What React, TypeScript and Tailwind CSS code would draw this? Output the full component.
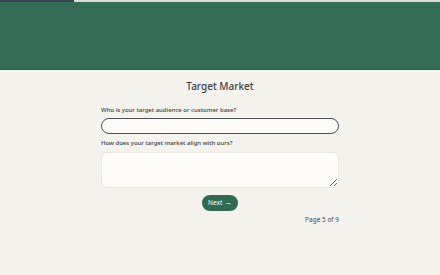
import { useState } from 'react';

export default function App() {
  const [audience, setAudience] = useState('');
  const [align, setAlign] = useState('');

  return (
    <div className="min-h-[275px] bg-[#f4f2ec] font-['Noto_Sans',sans-serif] text-[#3d3f44]">
      <div className="h-[2px] w-full bg-[#dddbd6]">
        <div className="h-full w-[74px] bg-[#3b3f52]" />
      </div>

      <header className="h-[68px] border-b border-[#2a5b45] bg-[#356c55]" />

      <main className="mx-auto flex w-[238px] flex-col pt-[9px]">
        <h1 className="text-center text-[10px] leading-[15px] font-medium">Target Market</h1>

        <label className="mt-[12px] text-[6px] leading-[9px] font-medium">
          Who is your target audience or customer base?
        </label>
        <input
          value={audience}
          onChange={(e) => setAudience(e.target.value)}
          className="mt-[3px] h-[16px] w-full rounded-full border-[1.5px] border-[#4b5057] bg-[#fdfcf9] px-2 text-[7px] outline-none"
        />

        <label className="mt-[5px] text-[6px] leading-[9px] font-medium">
          How does your target market align with ours?
        </label>
        <textarea
          value={align}
          onChange={(e) => setAlign(e.target.value)}
          className="mt-[4px] h-[36px] w-full resize-y rounded-[6px] border border-[#ebe8e1] bg-[#fdfcf9] px-2 text-[7px] outline-none"
        />

        <div className="mt-[7px] flex justify-center">
          <button
            type="button"
            className="flex h-[16px] w-[36px] items-center justify-center gap-[2px] rounded-full bg-[#2f6a52] text-[6.5px] text-white"
          >
            Next <span className="text-[7.5px] leading-none">→</span>
          </button>
        </div>

        <p className="mt-[4px] text-right text-[6.5px] leading-[9px] text-[#4a4c50]">Page 5 of 9</p>
      </main>
    </div>
  );
}
